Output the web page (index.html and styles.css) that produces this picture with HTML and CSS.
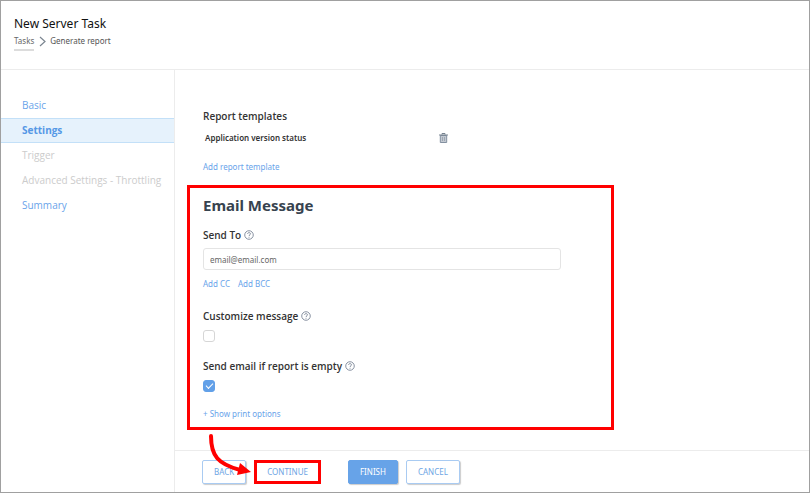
FILE: index.html
```html
<!doctype html>
<html lang="en">
<head>
	<meta charset="utf-8">
	<title>New Server Task</title>
	<link rel="stylesheet" href="styles.css">
</head>
<body>
	<svg class="sprite" aria-hidden="true">
		<symbol id="help" viewBox="0 0 11 11">
			<circle cx="5.5" cy="5.5" r="4.7" fill="none" stroke="currentColor" stroke-width="1"/>
			<path d="M3.9 4.3C4 2.4 7.1 2.4 7.1 4.2C7.1 5.3 5.5 5.4 5.5 6.6M5.5 7.5V8.5" fill="none" stroke="currentColor" stroke-width="1"/>
		</symbol>
	</svg>

	<div class="page">
		<header class="header">
			<h1>New Server Task</h1>
			<nav class="breadcrumb" aria-label="Breadcrumb">
				<a href="#">Tasks</a>
				<svg width="7" height="11" viewBox="0 0 7 11"><path d="M1 1L6 5.5L1 10" fill="none" stroke="#7b8590" stroke-width="1.2"/></svg>
				<span>Generate report</span>
			</nav>
		</header>

		<div class="columns">
			<nav class="steps" aria-label="Steps">
				<ul>
					<li><a href="#">Basic</a></li>
					<li class="active"><a href="#">Settings</a></li>
					<li class="disabled"><span>Trigger</span></li>
					<li class="disabled"><span>Advanced Settings - Throttling</span></li>
					<li><a href="#">Summary</a></li>
				</ul>
			</nav>

			<form class="main">
				<div class="content">
					<h3>Report templates</h3>
					<div class="template">
						<span>Application version status</span>
						<button type="button" class="trash" aria-label="Remove template">
							<svg width="9" height="10" viewBox="0 0 9 10">
								<path d="M1.3 2.5H7.7V9.5H1.3Z" fill="#c3c9d1" stroke="#8390a0"/>
								<path d="M0 2H9M3 1.5V.5H6V1.5" fill="none" stroke="#76828f"/>
								<path d="M3.5 4V8M5.5 4V8" stroke="#8c97a5" stroke-width=".7"/>
							</svg>
						</button>
					</div>
					<a class="link" href="#">Add report template</a>

					<section class="email">
						<h2>Email Message</h2>

						<div class="label">
							<label for="sendto">Send To</label>
							<svg class="help"><use href="#help"/></svg>
						</div>
						<input type="text" id="sendto" value="email@email.com">
						<div class="links">
							<a class="link" href="#">Add CC</a>
							<a class="link" href="#">Add BCC</a>
						</div>

						<div class="label spaced">
							<label for="customize">Customize message</label>
							<svg class="help"><use href="#help"/></svg>
						</div>
						<input type="checkbox" id="customize">

						<div class="label spaced">
							<label for="sendempty">Send email if report is empty</label>
							<svg class="help"><use href="#help"/></svg>
						</div>
						<input type="checkbox" id="sendempty" checked>

						<a class="link options" href="#">+ Show print options</a>
					</section>
				</div>

				<footer class="footer">
					<button type="button">BACK</button>
					<button type="button" class="continue">CONTINUE</button>
					<button type="button" class="primary">FINISH</button>
					<button type="button">CANCEL</button>
					<svg class="arrow" width="44" height="44" viewBox="0 0 44 44">
						<path d="M3 3C3 23 10 31 32 37" fill="none" stroke="#f00" stroke-width="4" stroke-linecap="round"/>
						<path d="M32 30L43 39L29 42Z" fill="#f00"/>
					</svg>
				</footer>
			</form>
		</div>
	</div>
</body>
</html>
```

FILE: styles.css
```css
* {
	box-sizing: border-box;
}

body {
	margin: 0;
	font-family: "Noto Sans", "Segoe UI", sans-serif;
	font-size: 8px;
	line-height: 16px;
	color: #333;
	background: #fff;
}

h1, h2, h3, ul {
	margin: 0;
	padding: 0;
}

a {
	color: #69a3ea;
	text-decoration: none;
}

.sprite {
	display: none;
}

.page {
	display: flex;
	flex-direction: column;
	min-height: 100vh;
	border: 1px solid #a0a0a0;
}

/* header */
.header {
	padding: 14px 13px 18px;
	border-bottom: 1px solid #ececec;
}

h1 {
	font-size: 12px;
	line-height: 18px;
	font-weight: normal;
	color: #111;
}

.breadcrumb {
	display: flex;
	align-items: flex-start;
	gap: 4px;
	color: #555;
}

.breadcrumb a {
	color: #666;
	border-bottom: 2px solid #dcdcdc;
}

.breadcrumb svg {
	margin: 3px 0 0 1px;
}

.columns {
	display: flex;
	flex: 1;
}

/* left menu */
.steps {
	width: 174px;
	padding-top: 23px;
	border-right: 1px solid #ececec;
	flex-shrink: 0;
}

.steps ul {
	list-style: none;
}

.steps li {
	padding-left: 21px;
	font-family: "Open Sans", "Segoe UI", sans-serif;
	font-size: 10px;
	line-height: 25px;
}

.steps .active {
	line-height: 23px;
	font-weight: bold;
	background: #e6f2fc;
	border: solid #c3e0f8;
	border-width: 1px 0;
}

.steps .active a {
	color: #5598e6;
}

.steps .disabled {
	color: #ccc;
}

/* content */
.main {
	display: flex;
	flex-direction: column;
	flex: 1;
}

.content {
	flex: 1;
	padding: 38px 28px 20px;
}

h3, .label {
	font-family: "Open Sans", "Segoe UI", sans-serif;
	font-size: 10px;
	font-weight: 600;
}

.template {
	display: flex;
	justify-content: space-between;
	width: 243px;
	margin: 6px 0 13px 2px;
	font-weight: 600;
}

.trash {
	display: flex;
	align-items: center;
	padding: 0;
	border: 0;
	background: none;
}

.link {
	display: block;
}

.email {
	max-width: 427px;
	margin: 10px 0 0 -16px;
	padding: 5px 13px;
	border: 3px solid #f00;
}

h2 {
	margin-bottom: 10px;
	font-size: 15px;
	line-height: 24px;
	font-weight: bold;
	color: #37434f;
}

.label {
	display: flex;
	align-items: center;
	gap: 3px;
}

.label.spaced {
	margin-top: 16px;
}

.help {
	width: 10px;
	height: 10px;
	color: #7c8797;
}

input[type=text] {
	display: block;
	width: 358px;
	max-width: 100%;
	height: 22px;
	margin: 5px 0 6px;
	padding: 0 6px;
	font: inherit;
	color: #666;
	background: #fff;
	border: 1px solid #e4e4e4;
	border-radius: 3px;
}

.links {
	display: flex;
	gap: 8px;
}

input[type=checkbox] {
	appearance: none;
	display: block;
	width: 12px;
	height: 12px;
	margin: 6px 0 0;
	border: 1px solid #d6d6d6;
	border-radius: 3px;
}

input[type=checkbox]:checked {
	border-color: #62a0e8;
	background: #62a0e8;
}

input[type=checkbox]:checked::after {
	content: "";
	display: block;
	width: 6px;
	height: 3px;
	margin: 2px;
	border: solid #fff;
	border-width: 0 0 1px 1px;
	transform: rotate(-45deg);
}

.options {
	margin-top: 14px;
}

/* buttons */
.footer {
	position: relative;
	display: flex;
	gap: 8px;
	padding: 9px 27px 8px;
	border-top: 1px solid #ececec;
}

.footer button {
	height: 24px;
	padding: 0 11px;
	font: inherit;
	color: #6ea5e4;
	background: #fff;
	border: 1px solid #a9cbf2;
	border-radius: 2px;
	box-shadow: 1px 1px 1px #ccc;
}

.footer .continue {
	margin-right: 19px;
	padding: 0 10px;
	border: 3px solid #f00;
	border-radius: 0;
	box-shadow: none;
}

.footer .primary {
	color: #fff;
	background: #67a3e8;
	border-color: #67a3e8;
}

.arrow {
	position: absolute;
	left: 33px;
	top: -18px;
}
```
